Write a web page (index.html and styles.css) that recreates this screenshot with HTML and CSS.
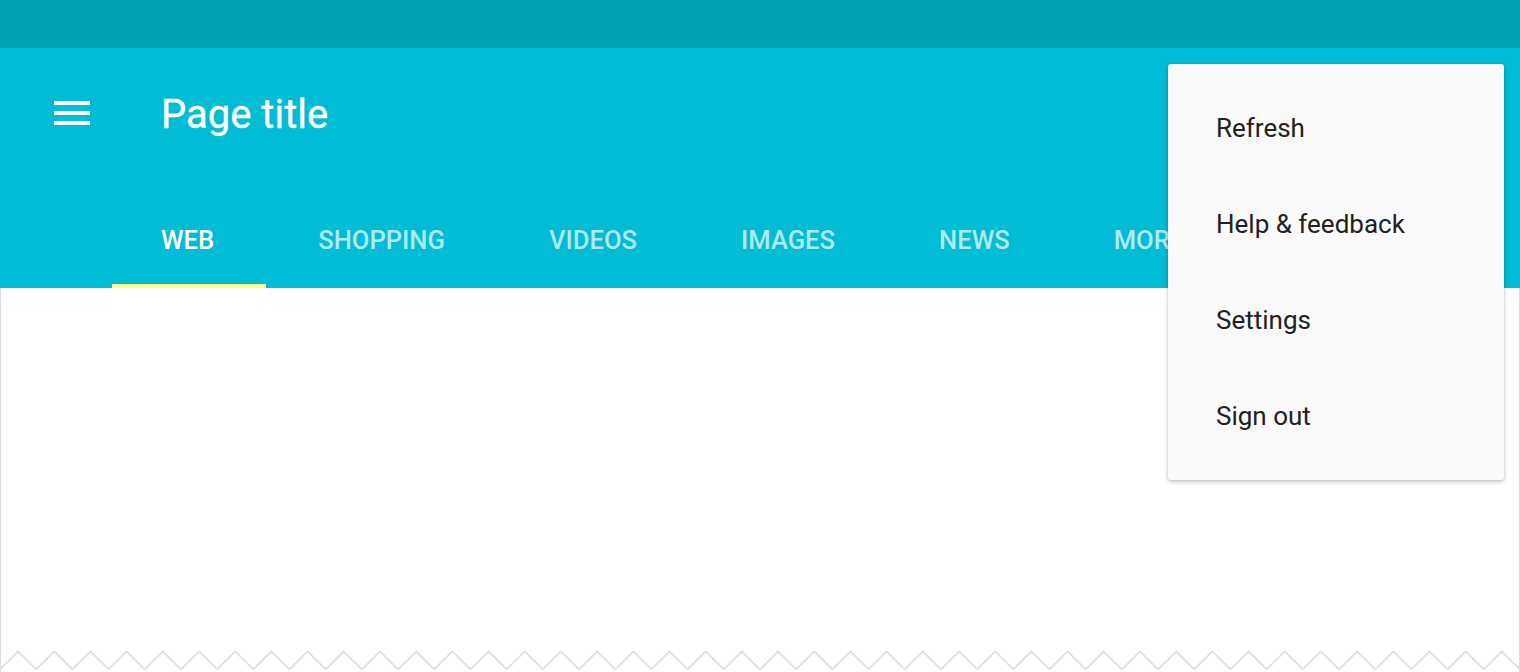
FILE: index.html
```html
<!DOCTYPE html>
<html lang="en">
<head>
<meta charset="utf-8">
<title>Page title</title>
<link rel="stylesheet" href="styles.css">
</head>
<body>
<div class="screen">
  <header class="appbar">
    <div class="statusbar"></div>
    <div class="toolbar">
      <button class="nav-btn" aria-label="Menu">
        <svg width="36" height="24" viewBox="0 0 36 24" aria-hidden="true">
          <rect x="0" y="0" width="36" height="4" fill="#fff"/>
          <rect x="0" y="10" width="36" height="4" fill="#fff"/>
          <rect x="0" y="20" width="36" height="4" fill="#fff"/>
        </svg>
      </button>
      <h1 class="title">Page title</h1>
    </div>
    <nav class="tabs">
      <a class="tab active">WEB</a>
      <a class="tab">SHOPPING</a>
      <a class="tab">VIDEOS</a>
      <a class="tab">IMAGES</a>
      <a class="tab">NEWS</a>
      <a class="tab">MORE</a>
    </nav>
  </header>
  <main class="content"></main>
  <svg class="zigzag" width="1520" height="22" viewBox="0 0 1520 22" aria-hidden="true">
    <defs>
      <pattern id="zz" x="0" y="0" width="36.19" height="22" patternUnits="userSpaceOnUse">
        <path d="M0 19.5 L18.095 1.5 L36.19 19.5" fill="none" stroke="#dcdcdc" stroke-width="1.6"/>
      </pattern>
    </defs>
    <rect x="0" y="0" width="1520" height="22" fill="url(#zz)"/>
  </svg>
  <ul class="menu">
    <li class="menu-item">Refresh</li>
    <li class="menu-item">Help &amp; feedback</li>
    <li class="menu-item">Settings</li>
    <li class="menu-item">Sign out</li>
  </ul>
</div>
</body>
</html>
```

FILE: styles.css
```css
* { box-sizing: border-box; }
html, body {
  margin: 0;
  padding: 0;
  background: #fff;
}
body {
  font-family: Roboto, "Noto Sans", "Liberation Sans", sans-serif;
  width: 1520px;
  height: 672px;
  overflow: hidden;
}
.screen {
  position: relative;
  width: 1520px;
  height: 672px;
  display: flex;
  flex-direction: column;
}
.appbar {
  background: #00bcd4;
  color: #fff;
}
.statusbar {
  height: 48px;
  background: #00a1b5;
}
.toolbar {
  height: 134px;
  display: flex;
  align-items: center;
  padding-left: 54px;
}
.nav-btn {
  border: 0;
  background: none;
  padding: 0;
  width: 36px;
  height: 24px;
  display: flex;
  margin: -4px 71px 0 0;
}
.title {
  margin: 0;
  font-size: 40px;
  line-height: 1;
  font-weight: 400;
  -webkit-text-stroke: 0.3px #fff;
}
.tabs {
  margin-top: 10px;
  height: 96px;
  display: flex;
  padding-left: 112px;
}
.tab {
  display: flex;
  align-items: center;
  justify-content: center;
  padding: 4px 52px 0;
  font-size: 25.6px;
  font-weight: 500;
  color: rgba(255, 255, 255, 0.7);
  border-bottom: 4px solid transparent;
}
.tab.active {
  color: #fff;
  border-bottom-color: #ffff8d;
  padding-left: 49px;
  padding-right: 52px;
}
.content {
  flex: 1;
  border-left: 1px solid #dcdcdc;
  border-right: 1px solid #dcdcdc;
}
.zigzag {
  display: block;
  margin-top: -22px;
}
.menu {
  position: absolute;
  top: 64px;
  left: 1168px;
  width: 336px;
  margin: 0;
  padding: 16px 0;
  list-style: none;
  background: #fafafa;
  border-radius: 3px;
  box-shadow: 0 2px 4px rgba(0, 0, 0, 0.22), 0 0 2px rgba(0, 0, 0, 0.12);
}
.menu-item {
  height: 96px;
  display: flex;
  align-items: center;
  padding-left: 48px;
  font-size: 26px;
  color: #212121;
}
```
